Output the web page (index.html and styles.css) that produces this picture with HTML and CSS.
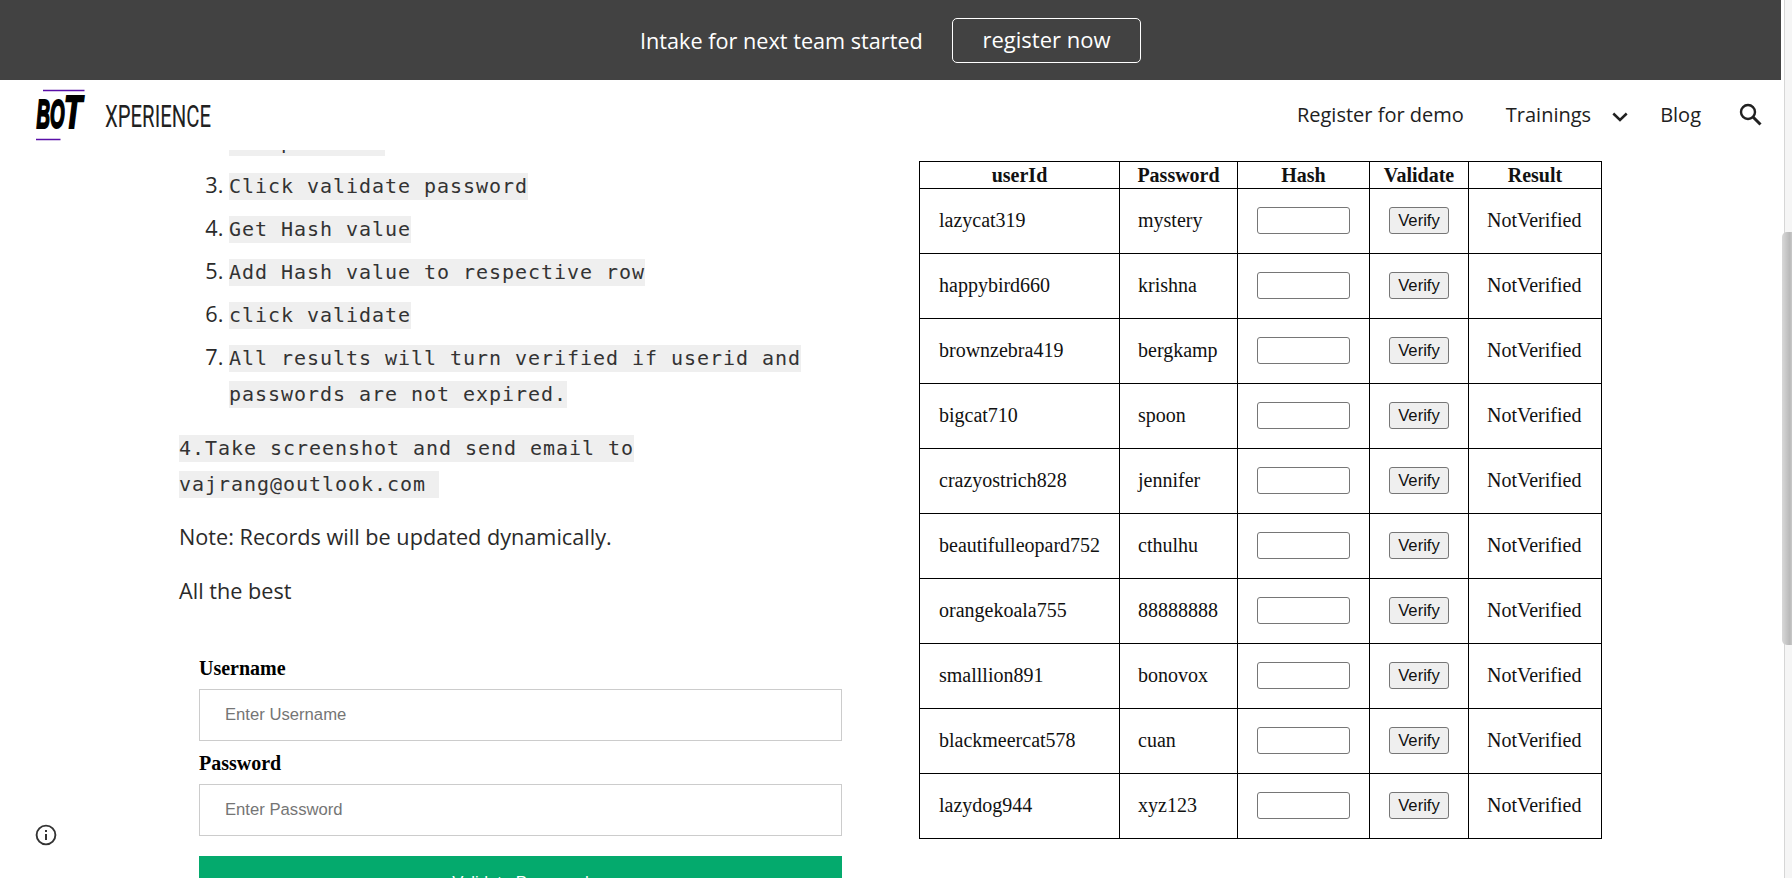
FILE: index.html
```html
<!DOCTYPE html>
<html lang="en">
<head>
<meta charset="utf-8">
<title>BOT Xperience</title>
<link rel="stylesheet" href="styles.css">
</head>
<body>
<div class="page">
  <div class="banner">
    <span class="banner-text">Intake for next team started</span>
    <a class="banner-button">register now</a>
  </div>
  <header class="header">
    <svg class="logo" width="54" height="62" viewBox="0 -3 54 62">
      <path d="M8 3.500H49.500M1 52.500H25.500" stroke="#5a10a8" stroke-width="1.400"/>
      <g font-family="Liberation Sans" font-weight="bold" font-style="italic" stroke="#000" stroke-width="2.200">
        <text x="1.500" y="41" font-size="40" textLength="28" lengthAdjust="spacingAndGlyphs">BO</text>
        <text x="29" y="41" font-size="47" textLength="18" lengthAdjust="spacingAndGlyphs">T</text>
      </g>
    </svg>
    <svg class="brand" width="116" height="50" viewBox="0 0 116 50">
      <text x="0" y="36" font-family="Roboto" font-size="30.500" fill="#212121" textLength="106" lengthAdjust="spacingAndGlyphs">XPERIENCE</text>
    </svg>
    <nav class="nav">
      <a class="nav-demo">Register for demo</a>
      <a class="nav-trainings">Trainings</a>
      <svg class="chevron" width="16" height="10" viewBox="0 0 16 10"><path d="M1.300 1.500L8 8L14.700 1.500" fill="none" stroke="#212121" stroke-width="2.500"/></svg>
      <a class="nav-blog">Blog</a>
      <svg class="search" width="24" height="24" viewBox="0 0 24 24" fill="none" stroke="#212121"><circle cx="9" cy="9" r="7" stroke-width="2.400"/><path d="M14 14L21.500 21.500" stroke-width="3"/></svg>
    </nav>
  </header>
  <main class="content">
    <section class="left">
      <ol class="steps" start="2">
        <li><code>Add password</code></li>
        <li><code>Click validate password</code></li>
        <li><code>Get Hash value</code></li>
        <li><code>Add Hash value to respective row</code></li>
        <li><code>click validate</code></li>
        <li><code>All results will turn verified if userid and<br>passwords are not expired.</code></li>
      </ol>
      <p class="para"><code>4.Take screenshot and send email to<br>vajrang@outlook.com&nbsp;</code></p>
      <p class="para">Note: Records will be updated dynamically.</p>
      <p class="para">All the best</p>
      <form class="login">
        <label class="label">Username</label>
        <input class="field" type="text" placeholder="Enter Username">
        <label class="label">Password</label>
        <input class="field" type="text" placeholder="Enter Password">
        <button class="submit" type="button">Validate Password</button>
      </form>
    </section>
    <section class="right">
      <table class="users">
        <colgroup><col class="c1"><col class="c2"><col class="c3"><col class="c4"><col class="c5"></colgroup>
        <tr><th>userId</th><th>Password</th><th>Hash</th><th>Validate</th><th>Result</th></tr>
        <tr><td>lazycat319</td><td>mystery</td><td><input class="hash"></td><td><button class="verify">Verify</button></td><td>NotVerified</td></tr>
        <tr><td>happybird660</td><td>krishna</td><td><input class="hash"></td><td><button class="verify">Verify</button></td><td>NotVerified</td></tr>
        <tr><td>brownzebra419</td><td>bergkamp</td><td><input class="hash"></td><td><button class="verify">Verify</button></td><td>NotVerified</td></tr>
        <tr><td>bigcat710</td><td>spoon</td><td><input class="hash"></td><td><button class="verify">Verify</button></td><td>NotVerified</td></tr>
        <tr><td>crazyostrich828</td><td>jennifer</td><td><input class="hash"></td><td><button class="verify">Verify</button></td><td>NotVerified</td></tr>
        <tr><td>beautifulleopard752</td><td>cthulhu</td><td><input class="hash"></td><td><button class="verify">Verify</button></td><td>NotVerified</td></tr>
        <tr><td>orangekoala755</td><td>88888888</td><td><input class="hash"></td><td><button class="verify">Verify</button></td><td>NotVerified</td></tr>
        <tr><td>smalllion891</td><td>bonovox</td><td><input class="hash"></td><td><button class="verify">Verify</button></td><td>NotVerified</td></tr>
        <tr><td>blackmeercat578</td><td>cuan</td><td><input class="hash"></td><td><button class="verify">Verify</button></td><td>NotVerified</td></tr>
        <tr><td>lazydog944</td><td>xyz123</td><td><input class="hash"></td><td><button class="verify">Verify</button></td><td>NotVerified</td></tr>
      </table>
    </section>
  </main>
</div>
<svg class="info" width="22" height="22" viewBox="0 0 22 22"><circle cx="11" cy="11" r="9.400" fill="none" stroke="#333" stroke-width="1.900"/><path d="M11 10V16M11 6V8" stroke="#333" stroke-width="2"/></svg>
<div class="scrollbar"><div class="thumb"></div></div>
</body>
</html>
```

FILE: styles.css
```css
* { box-sizing: border-box; }
body { margin: 0; height: 878px; overflow: hidden; background: #fff; font-family: "Open Sans", sans-serif; color: #212121; }
.page { width: 1781px; height: 878px; overflow: hidden; }
.banner { height: 80px; background: #424242; color: #fff; display: flex; align-items: center; padding-left: 640px; font-size: 21.67px; }
.banner-text { width: 312px; white-space: nowrap; }
.banner-button { width: 189px; height: 45px; border: 1px solid #fff; border-radius: 5px; text-align: center; line-height: 41px; font-size: 22px; }
.header { position: relative; z-index: 1; height: 70px; background: #fff; display: flex; align-items: center; }
.logo { margin: -1px 0 0 35px; }
.brand { margin: 2px 0 0 16px; }
.nav { flex: 1; display: flex; align-items: center; justify-content: flex-end; padding-right: 18px; font-size: 20px; white-space: nowrap; }
.nav a { line-height: 30px; margin-top: -1px; }
.nav-trainings { padding-left: 42px; }
.chevron { margin: 4px 32px 0 21px; }
.search { margin-left: 38px; }
.content { display: flex; margin-top: -27px; }
.left { width: 663px; margin-left: 179px; font-size: 21.67px; line-height: 36px; color: #2a2a2a; }
.steps { margin: 0; padding: 0 0 0 50px; }
.steps li { margin-bottom: 7px; }
.steps li:first-child { margin-bottom: 8px; }
/* The tinted band behind code is a fixed 27px tall, one band per line. */
code { font-family: "DejaVu Sans Mono", monospace; font-size: 20px; letter-spacing: 0.96px; line-height: 1px; color: #333; background: linear-gradient(#efefef, #efefef) center / 100% 27px no-repeat; padding: 4px 0; -webkit-box-decoration-break: clone; box-decoration-break: clone; }
.para { margin: 0 0 18px; }
.steps + .para { margin-top: 18px; }
.login { margin: 47px 0 0 20px; display: flex; flex-direction: column; font-family: "Liberation Serif", serif; color: #000; }
.label { font-size: 20px; font-weight: bold; line-height: 25px; }
.field { height: 52px; margin: 8px 0 10px; padding: 0 25px; border: 1px solid #ccc; font: 16.67px "Liberation Sans", sans-serif; }
.field::placeholder { color: #757575; }
.submit { flex: none; height: 53px; margin-top: 10px; border: 0; background: #04aa6d; color: #fff; font: 16.67px "Liberation Sans", sans-serif; }
.right { margin: 38px 0 0 77px; }
.users { border-collapse: collapse; table-layout: fixed; width: 683px; font: 20px "Liberation Serif", serif; color: #111; }
.users th, .users td { border: 1px solid #000; padding: 0; }
.users th { height: 27px; line-height: 24px; }
.users td { height: 65px; padding: 0 0 2px 19px; white-space: nowrap; }
.users td:nth-child(2), .users td:nth-child(5) { padding-left: 18px; }
.c1 { width: 200px; }
.c2 { width: 118px; }
.c3 { width: 132px; }
.c4 { width: 99px; }
.c5 { width: 133px; }
.hash { display: block; width: 93px; height: 27px; border: 1px solid #767676; border-radius: 3px; }
.verify { display: block; width: 60px; height: 27px; padding: 1px 0 0; border: 1px solid #767676; border-radius: 3px; background: #efefef; font: 16.67px "Liberation Sans", sans-serif; color: #111; }
.info { position: fixed; left: 35px; top: 824px; }
.scrollbar { position: fixed; right: 0; top: 0; width: 8px; height: 878px; background: #f5f5f5; border-left: 1px solid #d6d6d6; }
.thumb { position: absolute; left: -3px; top: 232px; width: 11px; height: 413px; background: linear-gradient(90deg, #d8d8d8, #b9b9b9 70%, #cfcfcf); border-radius: 5px 0 0 5px; }
```
